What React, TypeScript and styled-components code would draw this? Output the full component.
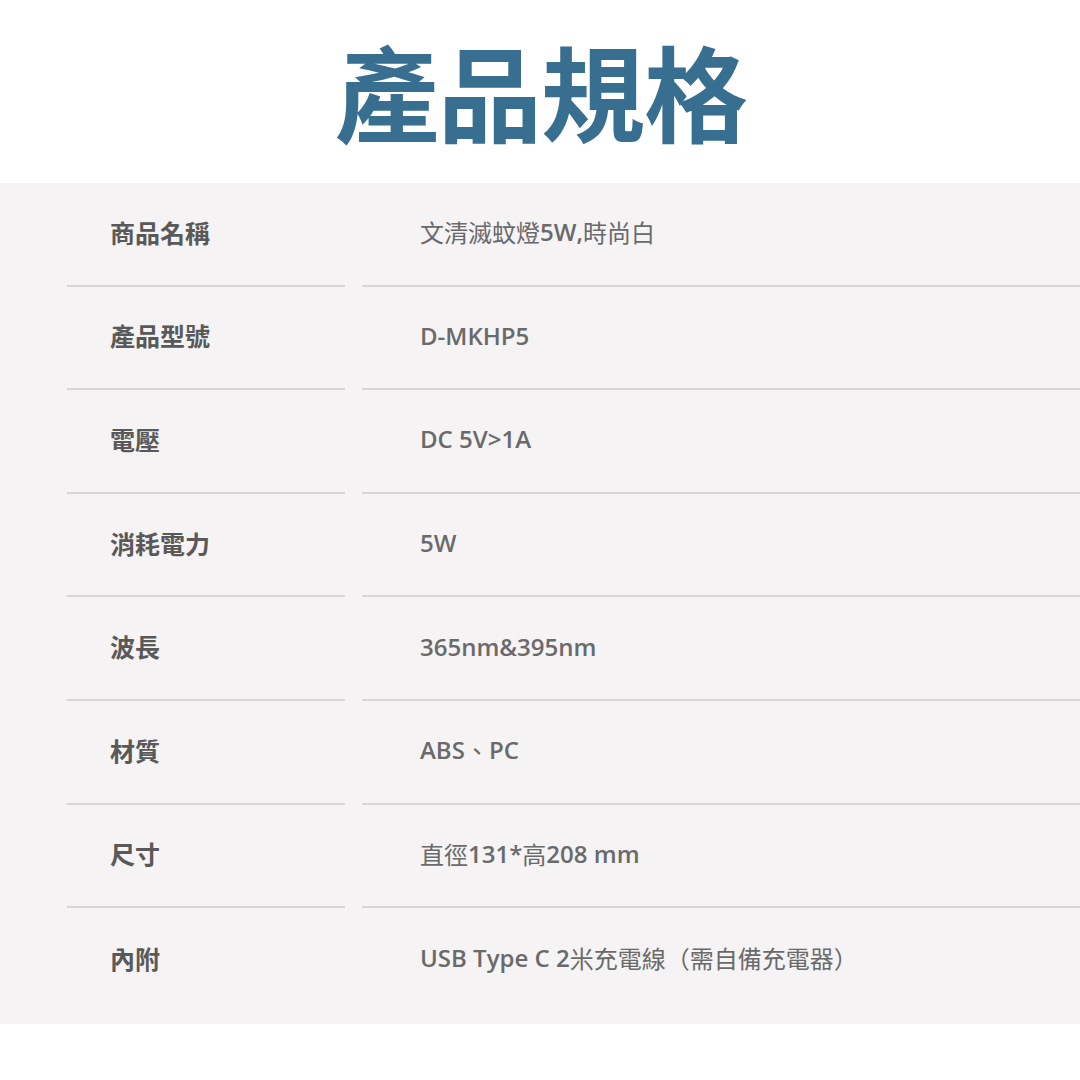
import React from "react";
import styled, { createGlobalStyle } from "styled-components";

const Global = createGlobalStyle`
  html, body { margin: 0; padding: 0; background: #ffffff; }
  body { font-family: "Open Sans", "Noto Sans CJK TC", sans-serif; }
`;

const Page = styled.div`
  width: 1080px;
  height: 1080px;
  background: #ffffff;
  display: flex;
  flex-direction: column;
`;

const Header = styled.header`
  height: 183px;
  display: flex;
  align-items: center;
  justify-content: center;
`;

const Title = styled.h1`
  margin: 0;
  font-family: "Noto Sans CJK TC", sans-serif;
  font-weight: 700;
  font-size: 104px;
  line-height: 1;
  color: #386f91;
  letter-spacing: -1px;
  transform: translate(1px, -2px);
`;

const Panel = styled.section`
  background: #f5f3f4;
  padding-bottom: 12px;
`;

const Row = styled.div<{ $last?: boolean }>`
  display: grid;
  grid-template-columns: 278px 1fr;
  column-gap: 17px;
  padding-left: 67px;
  height: 103.6px;
  & > * {
    border-bottom: ${(p) => (p.$last ? "none" : "2px solid #d7d5d6")};
  }
`;

const Label = styled.div`
  box-sizing: border-box;
  display: flex;
  align-items: center;
  padding-left: 43px;
  padding-bottom: 4px;
  font-family: "Noto Sans CJK TC", sans-serif;
  font-weight: 700;
  font-size: 25px;
  color: #595959;
`;

const Value = styled.div`
  box-sizing: border-box;
  display: flex;
  align-items: center;
  padding-left: 58px;
  padding-bottom: 4px;
  font-family: "Open Sans", "Noto Sans CJK TC", sans-serif;
  font-weight: 600;
  font-size: 24px;
  color: #6a6a6a;
  white-space: pre;
`;

const Cjk = styled.span`
  font-family: "Noto Sans CJK TC", sans-serif;
  font-weight: 400;
  font-size: 24px;
`;

const splitCjk = (s: string) =>
  s.split(/([\u3000-\u9fff\uff00-\uffef]+)/).filter(Boolean).map((part, i) =>
    /[\u3000-\u9fff\uff00-\uffef]/.test(part) ? <Cjk key={i}>{part}</Cjk> : <span key={i}>{part}</span>
  );

const specs: [string, string][] = [
  ["商品名稱", "文清滅蚊燈5W,時尚白"],
  ["產品型號", "D-MKHP5"],
  ["電壓", "DC 5V>1A"],
  ["消耗電力", "5W"],
  ["波長", "365nm&395nm"],
  ["材質", "ABS、PC"],
  ["尺寸", "直徑131*高208 mm"],
  ["內附", "USB Type C 2米充電線（需自備充電器）"],
];

export default function App() {
  return (
    <Page>
      <Global />
      <Header>
        <Title>產品規格</Title>
      </Header>
      <Panel>
        {specs.map(([k, v], i) => (
          <Row key={k} $last={i === specs.length - 1}>
            <Label>{k}</Label>
            <Value>{splitCjk(v)}</Value>
          </Row>
        ))}
      </Panel>
    </Page>
  );
}
